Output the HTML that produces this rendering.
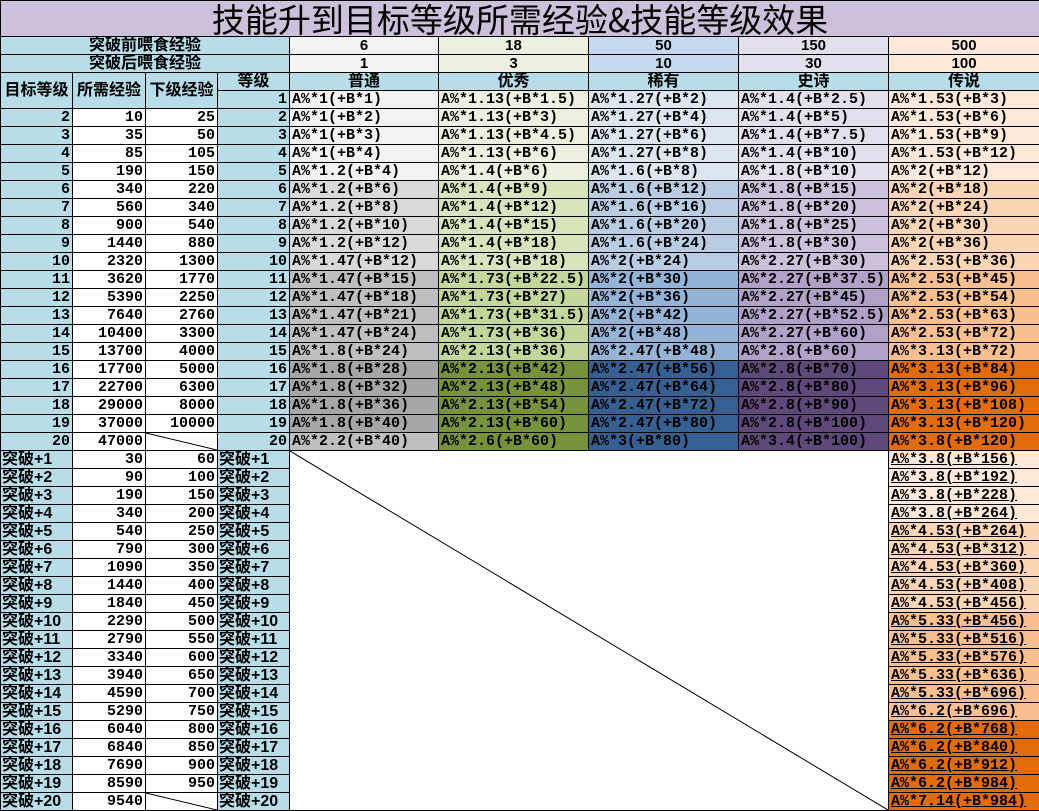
<!DOCTYPE html>
<html><head><meta charset="utf-8"><style>
body{margin:0;width:1039px;height:811px;overflow:hidden;background:#fff}
table{border-collapse:collapse;table-layout:fixed;width:1039px;font-family:"Liberation Mono","Noto Sans CJK SC",monospace;font-weight:bold;font-size:15px;color:#000}
td{border:1px solid #000;padding:0 2px;height:17px;line-height:17px;white-space:nowrap;overflow:hidden}
tr{height:18px}
.t td{height:35px;background:#ccc0da;text-align:center;font-family:"Noto Sans CJK SC",sans-serif;font-weight:normal;font-size:33px;line-height:35px;padding:0}
.b{background:#b7dee8}
.c{text-align:center;font-family:"Liberation Sans","Noto Sans CJK SC",sans-serif;font-size:15px}
.r{text-align:right}
.w{background:#fff}
.h{font-family:"Liberation Sans","Noto Sans CJK SC",sans-serif;font-size:16px}
.k{font-family:"Liberation Sans","Noto Sans CJK SC",sans-serif;font-size:16px;padding-left:1px}
.g1{background:#f2f2f2}.g2{background:#d9d9d9}.g3{background:#bfbfbf}.g4{background:#a6a6a6}
.e1{background:#ebf1de}.e2{background:#d8e4bc}.e3{background:#c4d79b}.e4{background:#76933c}
.x1{background:#dce6f1}.x2{background:#b8cce4}.x3{background:#95b3d7}.x4{background:#366092}
.s1{background:#e4dfec}.s2{background:#ccc0da}.s3{background:#b1a0c7}.s4{background:#60497a}
.l1{background:#fde9d9}.l2{background:#fcd5b4}.l3{background:#fabf8f}.l4{background:#e26b0a}
.u{text-decoration:underline}
.d{position:relative;padding:0}
.d svg{position:absolute;left:0;top:0;width:100%;height:100%}
</style></head><body>
<table>
<colgroup><col style="width:72px"><col style="width:73px"><col style="width:72px"><col style="width:72px"><col style="width:149px"><col style="width:150px"><col style="width:150px"><col style="width:150px"><col style="width:151px"></colgroup>
<tr class="t" style="height:36px"><td colspan="9">技能升到目标等级所需经验&amp;技能等级效果</td></tr>
<tr><td colspan="4" class="b c h">突破前喂食经验</td><td class="c g1">6</td><td class="c e1">18</td><td class="c" style="background:#c5d9f1">50</td><td class="c s1">150</td><td class="c l1">500</td></tr>
<tr><td colspan="4" class="b c h">突破后喂食经验</td><td class="c g1">1</td><td class="c e1">3</td><td class="c" style="background:#c5d9f1">10</td><td class="c s1">30</td><td class="c l1">100</td></tr>
<tr><td rowspan="2" class="b c h">目标等级</td><td rowspan="2" class="b c h">所需经验</td><td rowspan="2" class="b c h">下级经验</td><td class="b c h">等级</td><td class="b c h">普通</td><td class="b c h">优秀</td><td class="b c h">稀有</td><td class="b c h">史诗</td><td class="b c h">传说</td></tr>
<tr><td class="b r">1</td><td class="g1">A%*1(+B*1)</td><td class="e1">A%*1.13(+B*1.5)</td><td class="x1">A%*1.27(+B*2)</td><td class="s1">A%*1.4(+B*2.5)</td><td class="l1">A%*1.53(+B*3)</td></tr>
<tr><td class="b r">2</td><td class="w r">10</td><td class="w r">25</td><td class="b r">2</td><td class="g1">A%*1(+B*2)</td><td class="e1">A%*1.13(+B*3)</td><td class="x1">A%*1.27(+B*4)</td><td class="s1">A%*1.4(+B*5)</td><td class="l1">A%*1.53(+B*6)</td></tr>
<tr><td class="b r">3</td><td class="w r">35</td><td class="w r">50</td><td class="b r">3</td><td class="g1">A%*1(+B*3)</td><td class="e1">A%*1.13(+B*4.5)</td><td class="x1">A%*1.27(+B*6)</td><td class="s1">A%*1.4(+B*7.5)</td><td class="l1">A%*1.53(+B*9)</td></tr>
<tr><td class="b r">4</td><td class="w r">85</td><td class="w r">105</td><td class="b r">4</td><td class="g1">A%*1(+B*4)</td><td class="e1">A%*1.13(+B*6)</td><td class="x1">A%*1.27(+B*8)</td><td class="s1">A%*1.4(+B*10)</td><td class="l1">A%*1.53(+B*12)</td></tr>
<tr><td class="b r">5</td><td class="w r">190</td><td class="w r">150</td><td class="b r">5</td><td class="g1">A%*1.2(+B*4)</td><td class="e1">A%*1.4(+B*6)</td><td class="x1">A%*1.6(+B*8)</td><td class="s1">A%*1.8(+B*10)</td><td class="l1">A%*2(+B*12)</td></tr>
<tr><td class="b r">6</td><td class="w r">340</td><td class="w r">220</td><td class="b r">6</td><td class="g2">A%*1.2(+B*6)</td><td class="e2">A%*1.4(+B*9)</td><td class="x2">A%*1.6(+B*12)</td><td class="s2">A%*1.8(+B*15)</td><td class="l2">A%*2(+B*18)</td></tr>
<tr><td class="b r">7</td><td class="w r">560</td><td class="w r">340</td><td class="b r">7</td><td class="g2">A%*1.2(+B*8)</td><td class="e2">A%*1.4(+B*12)</td><td class="x2">A%*1.6(+B*16)</td><td class="s2">A%*1.8(+B*20)</td><td class="l2">A%*2(+B*24)</td></tr>
<tr><td class="b r">8</td><td class="w r">900</td><td class="w r">540</td><td class="b r">8</td><td class="g2">A%*1.2(+B*10)</td><td class="e2">A%*1.4(+B*15)</td><td class="x2">A%*1.6(+B*20)</td><td class="s2">A%*1.8(+B*25)</td><td class="l2">A%*2(+B*30)</td></tr>
<tr><td class="b r">9</td><td class="w r">1440</td><td class="w r">880</td><td class="b r">9</td><td class="g2">A%*1.2(+B*12)</td><td class="e2">A%*1.4(+B*18)</td><td class="x2">A%*1.6(+B*24)</td><td class="s2">A%*1.8(+B*30)</td><td class="l2">A%*2(+B*36)</td></tr>
<tr><td class="b r">10</td><td class="w r">2320</td><td class="w r">1300</td><td class="b r">10</td><td class="g2">A%*1.47(+B*12)</td><td class="e2">A%*1.73(+B*18)</td><td class="x2">A%*2(+B*24)</td><td class="s2">A%*2.27(+B*30)</td><td class="l2">A%*2.53(+B*36)</td></tr>
<tr><td class="b r">11</td><td class="w r">3620</td><td class="w r">1770</td><td class="b r">11</td><td class="g3">A%*1.47(+B*15)</td><td class="e3">A%*1.73(+B*22.5)</td><td class="x3">A%*2(+B*30)</td><td class="s3">A%*2.27(+B*37.5)</td><td class="l3">A%*2.53(+B*45)</td></tr>
<tr><td class="b r">12</td><td class="w r">5390</td><td class="w r">2250</td><td class="b r">12</td><td class="g3">A%*1.47(+B*18)</td><td class="e3">A%*1.73(+B*27)</td><td class="x3">A%*2(+B*36)</td><td class="s3">A%*2.27(+B*45)</td><td class="l3">A%*2.53(+B*54)</td></tr>
<tr><td class="b r">13</td><td class="w r">7640</td><td class="w r">2760</td><td class="b r">13</td><td class="g3">A%*1.47(+B*21)</td><td class="e3">A%*1.73(+B*31.5)</td><td class="x3">A%*2(+B*42)</td><td class="s3">A%*2.27(+B*52.5)</td><td class="l3">A%*2.53(+B*63)</td></tr>
<tr><td class="b r">14</td><td class="w r">10400</td><td class="w r">3300</td><td class="b r">14</td><td class="g3">A%*1.47(+B*24)</td><td class="e3">A%*1.73(+B*36)</td><td class="x3">A%*2(+B*48)</td><td class="s3">A%*2.27(+B*60)</td><td class="l3">A%*2.53(+B*72)</td></tr>
<tr><td class="b r">15</td><td class="w r">13700</td><td class="w r">4000</td><td class="b r">15</td><td class="g3">A%*1.8(+B*24)</td><td class="e3">A%*2.13(+B*36)</td><td class="x3">A%*2.47(+B*48)</td><td class="s3">A%*2.8(+B*60)</td><td class="l3">A%*3.13(+B*72)</td></tr>
<tr><td class="b r">16</td><td class="w r">17700</td><td class="w r">5000</td><td class="b r">16</td><td class="g4">A%*1.8(+B*28)</td><td class="e4">A%*2.13(+B*42)</td><td class="x4">A%*2.47(+B*56)</td><td class="s4">A%*2.8(+B*70)</td><td class="l4">A%*3.13(+B*84)</td></tr>
<tr><td class="b r">17</td><td class="w r">22700</td><td class="w r">6300</td><td class="b r">17</td><td class="g4">A%*1.8(+B*32)</td><td class="e4">A%*2.13(+B*48)</td><td class="x4">A%*2.47(+B*64)</td><td class="s4">A%*2.8(+B*80)</td><td class="l4">A%*3.13(+B*96)</td></tr>
<tr><td class="b r">18</td><td class="w r">29000</td><td class="w r">8000</td><td class="b r">18</td><td class="g4">A%*1.8(+B*36)</td><td class="e4">A%*2.13(+B*54)</td><td class="x4">A%*2.47(+B*72)</td><td class="s4">A%*2.8(+B*90)</td><td class="l4">A%*3.13(+B*108)</td></tr>
<tr><td class="b r">19</td><td class="w r">37000</td><td class="w r">10000</td><td class="b r">19</td><td class="g4">A%*1.8(+B*40)</td><td class="e4">A%*2.13(+B*60)</td><td class="x4">A%*2.47(+B*80)</td><td class="s4">A%*2.8(+B*100)</td><td class="l4">A%*3.13(+B*120)</td></tr>
<tr><td class="b r">20</td><td class="w r">47000</td><td class="w d"><svg viewBox="0 0 100 100" preserveAspectRatio="none"><line x1="0" y1="0" x2="100" y2="100" stroke="#000" stroke-width="1" vector-effect="non-scaling-stroke"/></svg></td><td class="b r">20</td><td class="g3">A%*2.2(+B*40)</td><td class="e4">A%*2.6(+B*60)</td><td class="x4">A%*3(+B*80)</td><td class="s4">A%*3.4(+B*100)</td><td class="l4">A%*3.8(+B*120)</td></tr>
<tr><td class="b k">突破+1</td><td class="w r">30</td><td class="w r">60</td><td class="b k">突破+1</td><td rowspan="20" colspan="4" class="w d"><svg viewBox="0 0 100 100" preserveAspectRatio="none"><line x1="0" y1="0" x2="100" y2="100" stroke="#000" stroke-width="1" vector-effect="non-scaling-stroke"/></svg></td><td class="l1 u">A%*3.8(+B*156)</td></tr>
<tr><td class="b k">突破+2</td><td class="w r">90</td><td class="w r">100</td><td class="b k">突破+2</td><td class="l1 u">A%*3.8(+B*192)</td></tr>
<tr><td class="b k">突破+3</td><td class="w r">190</td><td class="w r">150</td><td class="b k">突破+3</td><td class="l1 u">A%*3.8(+B*228)</td></tr>
<tr><td class="b k">突破+4</td><td class="w r">340</td><td class="w r">200</td><td class="b k">突破+4</td><td class="l1 u">A%*3.8(+B*264)</td></tr>
<tr><td class="b k">突破+5</td><td class="w r">540</td><td class="w r">250</td><td class="b k">突破+5</td><td class="l2 u">A%*4.53(+B*264)</td></tr>
<tr><td class="b k">突破+6</td><td class="w r">790</td><td class="w r">300</td><td class="b k">突破+6</td><td class="l2 u">A%*4.53(+B*312)</td></tr>
<tr><td class="b k">突破+7</td><td class="w r">1090</td><td class="w r">350</td><td class="b k">突破+7</td><td class="l2 u">A%*4.53(+B*360)</td></tr>
<tr><td class="b k">突破+8</td><td class="w r">1440</td><td class="w r">400</td><td class="b k">突破+8</td><td class="l2 u">A%*4.53(+B*408)</td></tr>
<tr><td class="b k">突破+9</td><td class="w r">1840</td><td class="w r">450</td><td class="b k">突破+9</td><td class="l2 u">A%*4.53(+B*456)</td></tr>
<tr><td class="b k">突破+10</td><td class="w r">2290</td><td class="w r">500</td><td class="b k">突破+10</td><td class="l3 u">A%*5.33(+B*456)</td></tr>
<tr><td class="b k">突破+11</td><td class="w r">2790</td><td class="w r">550</td><td class="b k">突破+11</td><td class="l3 u">A%*5.33(+B*516)</td></tr>
<tr><td class="b k">突破+12</td><td class="w r">3340</td><td class="w r">600</td><td class="b k">突破+12</td><td class="l3 u">A%*5.33(+B*576)</td></tr>
<tr><td class="b k">突破+13</td><td class="w r">3940</td><td class="w r">650</td><td class="b k">突破+13</td><td class="l3 u">A%*5.33(+B*636)</td></tr>
<tr><td class="b k">突破+14</td><td class="w r">4590</td><td class="w r">700</td><td class="b k">突破+14</td><td class="l3 u">A%*5.33(+B*696)</td></tr>
<tr><td class="b k">突破+15</td><td class="w r">5290</td><td class="w r">750</td><td class="b k">突破+15</td><td class="l3 u">A%*6.2(+B*696)</td></tr>
<tr><td class="b k">突破+16</td><td class="w r">6040</td><td class="w r">800</td><td class="b k">突破+16</td><td class="l4 u">A%*6.2(+B*768)</td></tr>
<tr><td class="b k">突破+17</td><td class="w r">6840</td><td class="w r">850</td><td class="b k">突破+17</td><td class="l4 u">A%*6.2(+B*840)</td></tr>
<tr><td class="b k">突破+18</td><td class="w r">7690</td><td class="w r">900</td><td class="b k">突破+18</td><td class="l4 u">A%*6.2(+B*912)</td></tr>
<tr><td class="b k">突破+19</td><td class="w r">8590</td><td class="w r">950</td><td class="b k">突破+19</td><td class="l4 u">A%*6.2(+B*984)</td></tr>
<tr><td class="b k">突破+20</td><td class="w r">9540</td><td class="w d"><svg viewBox="0 0 100 100" preserveAspectRatio="none"><line x1="0" y1="0" x2="100" y2="100" stroke="#000" stroke-width="1" vector-effect="non-scaling-stroke"/></svg></td><td class="b k">突破+20</td><td class="l4 u">A%*7.14(+B*984)</td></tr>
</table>
</body></html>
